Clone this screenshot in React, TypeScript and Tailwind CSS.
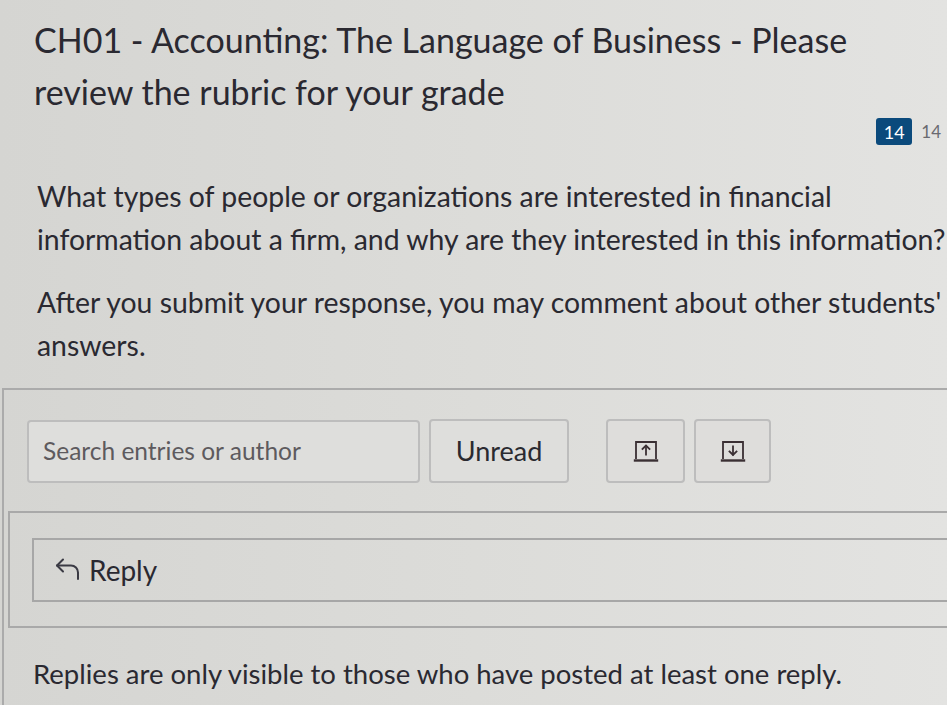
import React from "react"

const TrayIcon = ({ down }: { down?: boolean }) => (
  <svg width="28" height="24" viewBox="0 0 28 24" fill="none" stroke="#3a2f33" strokeLinecap="square">
    <path d="M4 19 V3 H24 V19" strokeWidth="1.8" />
    <path d="M14 7.5 V15.5" strokeWidth="1.8" />
    {down ? (
      <path d="M10.5 12.5 L14 16 L17.5 12.5" strokeWidth="1.8" />
    ) : (
      <path d="M10.5 10 L14 6.5 L17.5 10" strokeWidth="1.8" />
    )}
    <path d="M3 21.5 H25" strokeWidth="2.4" />
  </svg>
)

const ReplyIcon = () => (
  <svg width="30" height="28" viewBox="0 0 30 28" fill="none" stroke="#3a3a44" strokeWidth="2" strokeLinecap="round" strokeLinejoin="round">
    <path d="M9 3.5 L3 9.5 L9 15.5" />
    <path d="M3 9.5 H17 a7 7 0 0 1 7 7 V23" />
  </svg>
)

export default function App() {
  return (
    <div
      className="w-[947px] h-[705px] overflow-hidden bg-linear-to-r from-[#d5d5d2] via-[#dcdcd9] to-[#e3e3e1] text-[#2a2931]"
      style={{ fontFamily: "Lato, 'Open Sans', sans-serif" }}
    >
      <header className="pl-[34px] pt-[14px]">
        <h1 className="text-[34px] leading-[52px] font-normal whitespace-nowrap">
          CH01 - Accounting: The Language of Business - Please
          <br />
          review the rubric for your grade
        </h1>
      </header>

      <div className="flex justify-end items-center pr-[6px] h-[27px]">
        <span className="bg-[#0b4a7c] text-white text-[18px] leading-none rounded-[3px] w-[36px] h-[27px] flex items-center justify-center">
          14
        </span>
        <span className="text-[#6a6a70] text-[17px] ml-[9px]">14</span>
      </div>

      <div className="pl-[37px] pt-[30px] text-[28.4px] leading-[43px] whitespace-nowrap">
        <p>
          What types of people or organizations are interested in financial
          <br />
          information about a firm, and why are they interested in this information?
        </p>
        <p className="mt-[20px]">
          After you submit your response, you may comment about other students'
          <br />
          answers.
        </p>
      </div>

      <section className="mt-[21px] ml-[2px] border-t-2 border-l-2 border-[#ababab] h-[340px]">
        <div className="flex items-center pt-[29px] pb-[28px] pl-[23px]">
          <div className="w-[393px] h-[63px] border-2 border-[#bdbdbd] rounded-[4px] bg-[#dededc] flex items-center pl-[14px] text-[24.5px] text-[#5d5a5e]">
            Search entries or author
          </div>
          <button className="ml-[9px] w-[140px] h-[64px] border-2 border-[#bdbdbd] rounded-[4px] bg-[#dededc] text-[27px] text-[#2a2a30]">
            Unread
          </button>
          <button className="ml-[37px] w-[79px] h-[64px] border-2 border-[#bdbdbd] rounded-[4px] bg-[#dedddb] flex items-center justify-center">
            <TrayIcon />
          </button>
          <button className="ml-[9px] w-[77px] h-[64px] border-2 border-[#bdbdbd] rounded-[4px] bg-[#dedddb] flex items-center justify-center">
            <TrayIcon down />
          </button>
        </div>

        <div className="ml-[4px] border-t-2 border-l-2 border-b-2 border-[#a9a9a9] pt-[25px] pb-[24px] pl-[22px]">
          <div className="h-[64px] border-t-2 border-b-2 border-l-2 border-[#a7a7a7] flex items-center pl-[20px] gap-[5px]">
            <ReplyIcon />
            <span className="text-[28px]">Reply</span>
          </div>
        </div>

        <p className="pl-[29px] pt-[24px] text-[27.5px] leading-[43px] whitespace-nowrap">
          Replies are only visible to those who have posted at least one reply.
        </p>
      </section>
    </div>
  )
}
